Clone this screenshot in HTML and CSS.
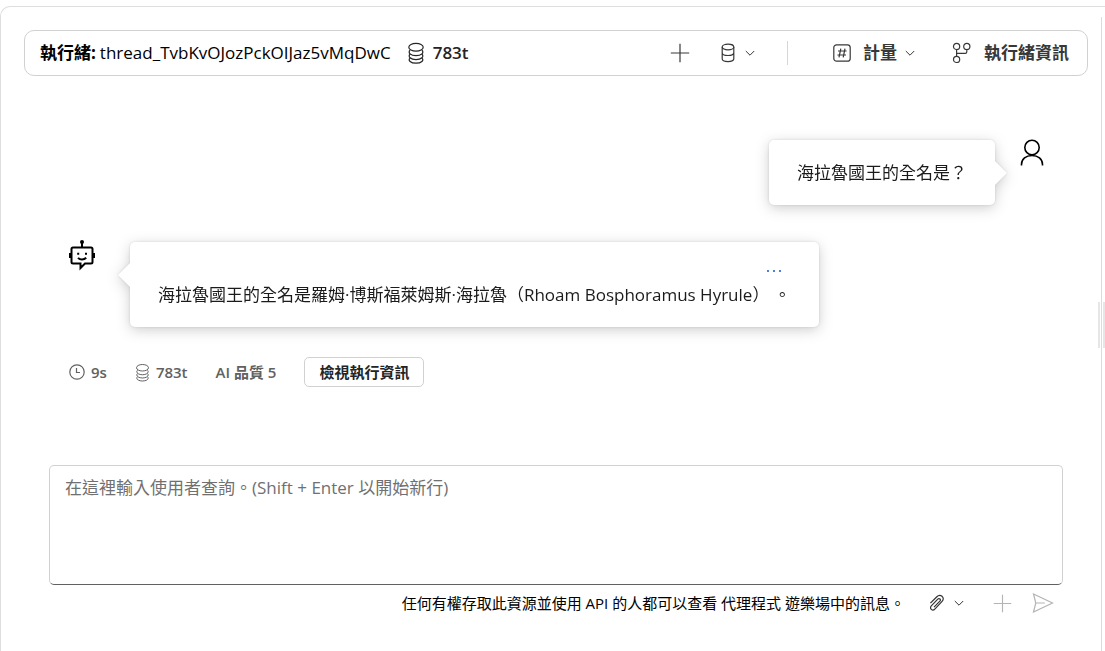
FILE: index.html
```html
<!DOCTYPE html>
<html lang="zh-Hant-TW">
<head>
<meta charset="utf-8">
<meta name="viewport" content="width=device-width, initial-scale=1">
<title>代理程式 遊樂場</title>
<link rel="stylesheet" href="styles.css">
</head>
<body>
<svg class="defs" aria-hidden="true">
  <symbol id="coins" viewBox="0 0 18 22"><ellipse cx="9" cy="5.300" rx="7.200" ry="3.900"/><path d="M3 8.300C.6 10.600 3.600 13.700 9 13.700s8.400-3.100 6-5.400M3 12.200C.6 14.500 3.600 17.600 9 17.600s8.400-3.100 6-5.400M3 16.100C.6 18.400 3.600 21.200 9 21.200s8.400-2.800 6-5.100"/></symbol>
  <symbol id="chevron" viewBox="0 0 10 10"><path d="M.8 3 5 7.200 9.200 3"/></symbol>
  <symbol id="plus" viewBox="0 0 20 20"><path d="M10 .8v18.400M.8 10h18.400"/></symbol>
</svg>
<main class="panel">
  <div class="content">
    <header class="toolbar">
      <p class="thread"><strong>執行緒:</strong> <span>thread_TvbKvOJozPckOIJaz5vMqDwC</span></p>
      <span class="tokens"><svg class="icon coins"><use href="#coins"/></svg><b>783t</b></span>
      <div class="actions">
        <button class="tool" type="button" aria-label="新增"><svg class="icon plus"><use href="#plus"/></svg></button>
        <button class="tool tool-menu" type="button" aria-label="資料">
          <svg class="icon db" viewBox="0 0 14 20"><ellipse cx="7" cy="4" rx="5.800" ry="2.800"/><path d="M1.200 4v11.800c0 1.600 2.500 2.800 5.800 2.800s5.800-1.200 5.800-2.800V4M1.200 9.700c0 1.600 2.500 2.800 5.800 2.800s5.800-1.200 5.800-2.800"/></svg>
          <svg class="icon chevron"><use href="#chevron"/></svg>
        </button>
        <span class="separator"></span>
        <button class="tool tool-metrics" type="button">
          <svg class="icon hash" viewBox="0 0 18 18"><rect x=".8" y=".8" width="16.400" height="16.400" rx="2.800"/><path d="M7.800 4.600 6 13.400M12 4.600l-1.800 8.800M5 7h8.600M4.400 11H13"/></svg>
          <span>計量</span>
          <svg class="icon chevron"><use href="#chevron"/></svg>
        </button>
        <button class="tool tool-info" type="button">
          <svg class="icon branch" viewBox="0 0 20 22"><circle cx="4.600" cy="4.400" r="3.100"/><circle cx="14.800" cy="4.400" r="3.100"/><circle cx="4.600" cy="17.400" r="3.100"/><path d="M4.600 7.500v6.800M14.800 7.500v2.300c0 1-.6 1.600-1.600 1.600H4.600"/></svg>
          <span>執行緒資訊</span>
        </button>
      </div>
    </header>

    <section class="chat">
      <article class="message message-user">
        <div class="bubble bubble-user"><p>海拉魯國王的全名是？</p></div>
        <svg class="avatar person" viewBox="0 1 24 28"><circle cx="12" cy="8.500" r="7.200"/><path d="M1.500 26.500v-1C1.500 20 6 16.500 12 16.500S22.500 20 22.500 25.500v1"/></svg>
      </article>

      <article class="message message-bot">
        <svg class="avatar robot" viewBox="0 2 26 30"><path d="M13 2v5M4 7.500h18q1.500 0 1.500 1.500v13q0 1.500-1.500 1.500h-6L11.500 28v-4.500H4q-1.500 0-1.500-1.500V9q0-1.500 1.500-1.500z"/><path d="M9 17.800c2 2.200 6 2.200 8.200 0"/><path class="solid" d="M0 13h3v5H0zM23 13h3v5h-3zM8.200 12.800h2v2h-2zM16 12.800h2v2h-2z"/><circle class="solid" cx="13" cy="2" r="2"/></svg>
        <div class="bubble bubble-bot">
          <button class="more" type="button" aria-label="更多"><svg viewBox="0 0 16 4"><circle cx="2" cy="2" r="1.100"/><circle cx="8" cy="2" r="1.100"/><circle cx="14" cy="2" r="1.100"/></svg></button>
          <p>海拉魯國王的全名是羅姆·博斯福萊姆斯·海拉魯（Rhoam Bosphoramus Hyrule） 。</p>
        </div>
      </article>

      <div class="run-meta">
        <span class="meta"><svg class="icon clock" viewBox="0 0 16 16"><circle cx="8" cy="8" r="7.200"/><path d="M7.500 4v4.500H11"/></svg>9s</span>
        <span class="meta"><svg class="icon coins-small"><use href="#coins"/></svg>783t</span>
        <span class="meta">AI 品質 5</span>
        <button class="run-info" type="button">檢視執行資訊</button>
      </div>
    </section>

    <form class="composer">
      <textarea class="query" aria-label="使用者查詢" placeholder="在這裡輸入使用者查詢。(Shift + Enter 以開始新行)"></textarea>
      <div class="composer-bar">
        <p class="notice">任何有權存取此資源並使用 API 的人都可以查看 代理程式 遊樂場中的訊息。</p>
        <button class="tool tool-attach" type="button" aria-label="附加檔案">
          <svg class="icon clip" viewBox="0 0 16 18"><path d="M1.400 9.200 7.600 3C9.200 1.400 11.400 1 13 2.300c1.700 1.500 1.600 3.500.1 5.100l-7.300 7.700c-1 1.100-2.500 1.200-3.500.3-1-.9-1-2.400 0-3.500l6.500-6.800c.7-.7 1.600-.7 2.200-.1.600.6.500 1.400-.1 2.100l-5.900 6.100"/></svg>
          <svg class="icon chevron"><use href="#chevron"/></svg>
        </button>
        <button class="tool faded" type="button" aria-label="新增" disabled><svg class="icon plus-small"><use href="#plus"/></svg></button>
        <button class="tool faded" type="submit" aria-label="傳送" disabled><svg class="icon send" viewBox="0 0 22 20"><path d="M1.500 1 20.500 10 1.500 19 3.800 10zM3.800 10h9"/></svg></button>
      </div>
    </form>
  </div>
  <div class="splitter" role="separator" aria-orientation="vertical"><span class="grip"></span></div>
</main>
</body>
</html>
```
FILE: styles.css
```css
* { box-sizing: border-box; }

body {
  margin: 0;
  padding-top: 6px;
  min-height: 100vh;
  display: flex;
  background: #fff;
  color: #1b1b1b;
  font-family: "Open Sans", "Noto Sans CJK TC", sans-serif;
  font-size: 17px;
  line-height: 24px;
  text-spacing-trim: space-all;
}

p { margin: 0; }

button {
  font: inherit;
  color: inherit;
  background: none;
  border: 0;
  padding: 0;
  white-space: nowrap;
}

svg {
  display: block;
  flex: none;
  fill: none;
  stroke: currentColor;
}

.defs {
  position: absolute;
  width: 0;
  height: 0;
}

.panel {
  flex: 1;
  min-width: 0;
  display: flex;
  border: 1px solid #dedede;
  border-width: 1px 0 0 1px;
  border-top-left-radius: 10px;
}

.content {
  flex: 1;
  min-width: 0;
  display: flex;
  flex-direction: column;
  padding: 23px 10px 36px 23px;
}

/* Toolbar */
.toolbar {
  display: flex;
  align-items: center;
  height: 46px;
  padding: 0 18px 0 15px;
  border: 1px solid #d1d1d1;
  border-radius: 10px;
}

.thread {
  display: flex;
  gap: 4px;
  color: #000;
  white-space: nowrap;
}

.tokens {
  display: flex;
  align-items: center;
  gap: 8px;
  margin-left: 16px;
  color: #242424;
}

.tokens b { font-weight: 600; }

.actions {
  display: flex;
  align-items: center;
  margin-left: auto;
  color: #383838;
  font-weight: 700;
}

.tool {
  display: flex;
  align-items: center;
}

.icon { stroke-width: 1.2; }
.coins { width: 18px; height: 22px; }
.plus { width: 20px; height: 20px; }
.db { width: 14px; height: 20px; }
.chevron { width: 10px; height: 10px; stroke-width: 1; }
.hash { width: 18px; height: 18px; }
.branch { width: 20px; height: 22px; }

.tool-menu { gap: 10px; margin-left: 31px; }
.separator {
  width: 1px;
  height: 24px;
  margin: 0 45px 0 32px;
  background: #d6d6d6;
}
.tool-metrics { gap: 12px; }
.tool-metrics .chevron { margin-left: -4px; }
.tool-info { gap: 12px; margin-left: 37px; }

/* Conversation */
.chat {
  flex: 1;
  padding: 64px 44px 0 45px;
}

.message {
  display: flex;
  align-items: flex-start;
}

.message-user {
  justify-content: flex-end;
  gap: 25px;
}

.message-bot {
  gap: 35px;
  margin-top: 37px;
}

.avatar { color: #000; overflow: visible; }
.person { width: 24px; height: 28px; stroke-width: 1.6; }
.robot { width: 26px; height: 30px; stroke-width: 2; }
.robot .solid { fill: #000; stroke: none; }

.bubble {
  position: relative;
  padding: 0 28px;
  background: #fff;
  border-radius: 5px;
  filter: drop-shadow(0 3px 7px rgba(0, 0, 0, 0.18)) drop-shadow(0 0 1px rgba(0, 0, 0, 0.12));
}

.bubble::after {
  content: "";
  position: absolute;
  top: 21px;
  width: 12px;
  height: 24px;
  background: #fff;
}

.bubble-user { padding-top: 21px; padding-bottom: 20px; }
.bubble-user::after {
  left: 100%;
  clip-path: polygon(0 0, 100% 50%, 0 100%);
}

.bubble-bot { padding-top: 20px; padding-bottom: 20px; }
.bubble-bot::after {
  right: 100%;
  clip-path: polygon(100% 0, 0 50%, 100% 100%);
}

.more {
  display: block;
  margin: 0 9px 0 auto;
  padding: 7px 0 10px;
  color: #2564cf;
}

.more svg {
  width: 16px;
  height: 4px;
  fill: currentColor;
  stroke: none;
}

/* Run details */
.run-meta {
  display: flex;
  align-items: center;
  gap: 28px;
  margin-top: 30px;
  color: #616161;
  font-size: 15px;
  font-weight: 600;
}

.meta {
  display: flex;
  align-items: center;
  gap: 6px;
}

.clock { width: 16px; height: 16px; }
.coins-small { width: 15px; height: 19px; }

.run-info {
  height: 30px;
  padding: 0 14px;
  border: 1px solid #d1d1d1;
  border-radius: 5px;
  color: #242424;
  font-weight: 700;
}

/* Composer */
.composer { padding: 0 25px; }

.query {
  display: block;
  width: 100%;
  height: 120px;
  padding: 10px 15px;
  border: 1px solid #d1d1d1;
  border-bottom-color: #616161;
  border-radius: 5px;
  background: #fff;
  color: #242424;
  font: inherit;
  resize: none;
}

.query::placeholder { color: #707070; opacity: 1; }

.composer-bar {
  display: flex;
  align-items: center;
  justify-content: flex-end;
  gap: 20px;
  padding: 6px 9px 0 0;
  color: #333;
}

.notice {
  margin-right: 4px;
  color: #000;
  font-size: 15px;
}

.tool-attach { gap: 9px; margin-right: 9px; }
.clip { width: 16px; height: 18px; }
.plus-small { width: 19px; height: 19px; }
.send { width: 22px; height: 20px; }
.faded { color: #b4b4b4; }

/* Pane divider */
.splitter {
  display: flex;
  align-items: center;
  justify-content: center;
  width: 7px;
  margin-top: 10px;
  background: linear-gradient(#dcdcdc, #dcdcdc) 3px 0 / 1px 100% no-repeat;
}

.grip {
  width: 7px;
  height: 46px;
  margin-bottom: 18px;
  border: solid #e6e6e6;
  border-width: 0 2px;
}
```
